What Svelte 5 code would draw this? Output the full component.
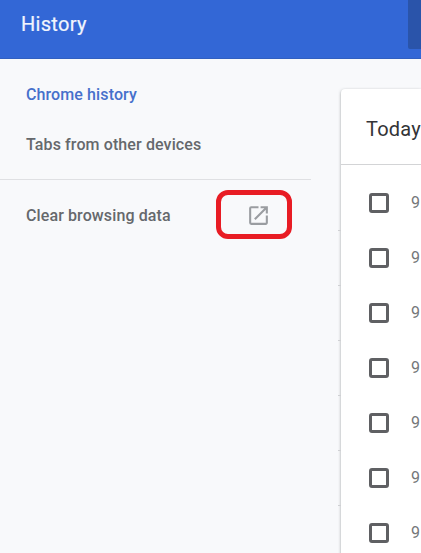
<script>
  const rows = [0, 1, 2, 3, 4, 5, 6];
</script>

<div class="page">
  <header>
    <h1>History</h1>
    <div class="search"></div>
  </header>
  <div class="body">
    <nav>
      <div class="item active">Chrome history</div>
      <div class="item">Tabs from other devices</div>
      <div class="item clear">
        <span>Clear browsing data</span>
        <span class="mark">
          <svg width="25" height="25" viewBox="0 0 24 24" fill="#9a9da1"><path d="M19 19H5V5h7V3H5a2 2 0 0 0-2 2v14a2 2 0 0 0 2 2h14c1.1 0 2-.9 2-2v-7h-2v7zM14 3v2h3.59l-9.83 9.83 1.41 1.41L19 6.41V10h2V3h-7z" /></svg>
        </span>
      </div>
    </nav>
    <main>
      <h2>Today</h2>
      {#each rows as row (row)}
        <div class="row"><span class="box"></span><span class="time">9</span></div>
      {/each}
    </main>
  </div>
</div>

<style>
  .page {
    width: 421px;
    height: 553px;
    overflow: hidden;
    display: flex;
    flex-direction: column;
    background: #f8f9fb;
    font-family: Roboto, "Liberation Sans", sans-serif;
  }
  header {
    flex: none;
    box-sizing: border-box;
    height: 59px;
    display: flex;
    justify-content: space-between;
    background: #3367d6;
    border-bottom: 1px solid #315fc0;
  }
  h1 {
    margin: 0;
    padding-left: 21px;
    font-size: 20px;
    line-height: 48px;
    font-weight: 400;
    letter-spacing: 0.3px;
    color: #f1f5fd;
    -webkit-text-stroke: 0.2px #f1f5fd;
  }
  .search {
    width: 13px;
    height: 49px;
    background: #2a54aa;
    border-bottom-left-radius: 2px;
  }
  .body {
    flex: 1;
    min-height: 0;
    display: flex;
  }
  nav {
    flex: none;
    width: 311px;
    padding-top: 11px;
    margin-right: 30px;
  }
  .item {
    height: 50px;
    padding-left: 26px;
    line-height: 50px;
    font-size: 16px;
    font-weight: 500;
    letter-spacing: 0.11px;
    white-space: nowrap;
    color: #65686c;
  }
  .active {
    color: #4670cb;
  }
  .clear {
    box-sizing: border-box;
    display: flex;
    justify-content: space-between;
    height: 72px;
    margin-top: 9px;
    padding-top: 11px;
    padding-right: 19px;
    border-top: 1px solid #dfe0e3;
  }
  .mark {
    box-sizing: border-box;
    width: 76px;
    height: 49px;
    margin-top: -1px;
    border: 5px solid #e81c24;
    border-radius: 12px;
    display: flex;
    align-items: center;
    justify-content: center;
    padding-left: 9px;
    padding-top: 2px;
  }
  main {
    flex: 1;
    height: 500px;
    margin-top: 30px;
    background: #fff;
    border-top-left-radius: 4px;
    box-shadow: 0 1px 3px rgba(60, 64, 67, 0.5);
  }
  h2 {
    box-sizing: border-box;
    height: 76px;
    margin: 0 0 10px;
    padding-left: 25px;
    border-bottom: 1px solid #d3d4d6;
    font-size: 20px;
    line-height: 80px;
    font-weight: 400;
    letter-spacing: 0.2px;
    color: #333437;
  }
  .row {
    height: 55px;
    display: flex;
    align-items: center;
    padding-left: 28px;
    position: relative;
  }
  .row + .row::before {
    content: "";
    position: absolute;
    left: -3px;
    top: 0;
    width: 3px;
    height: 1px;
    background: #cfd0d3;
  }
  .box {
    box-sizing: border-box;
    width: 20px;
    height: 20px;
    border: 3px solid #5f6063;
    border-radius: 3px;
  }
  .time {
    margin-left: 22px;
    font-size: 16px;
    color: #74777a;
  }
</style>
